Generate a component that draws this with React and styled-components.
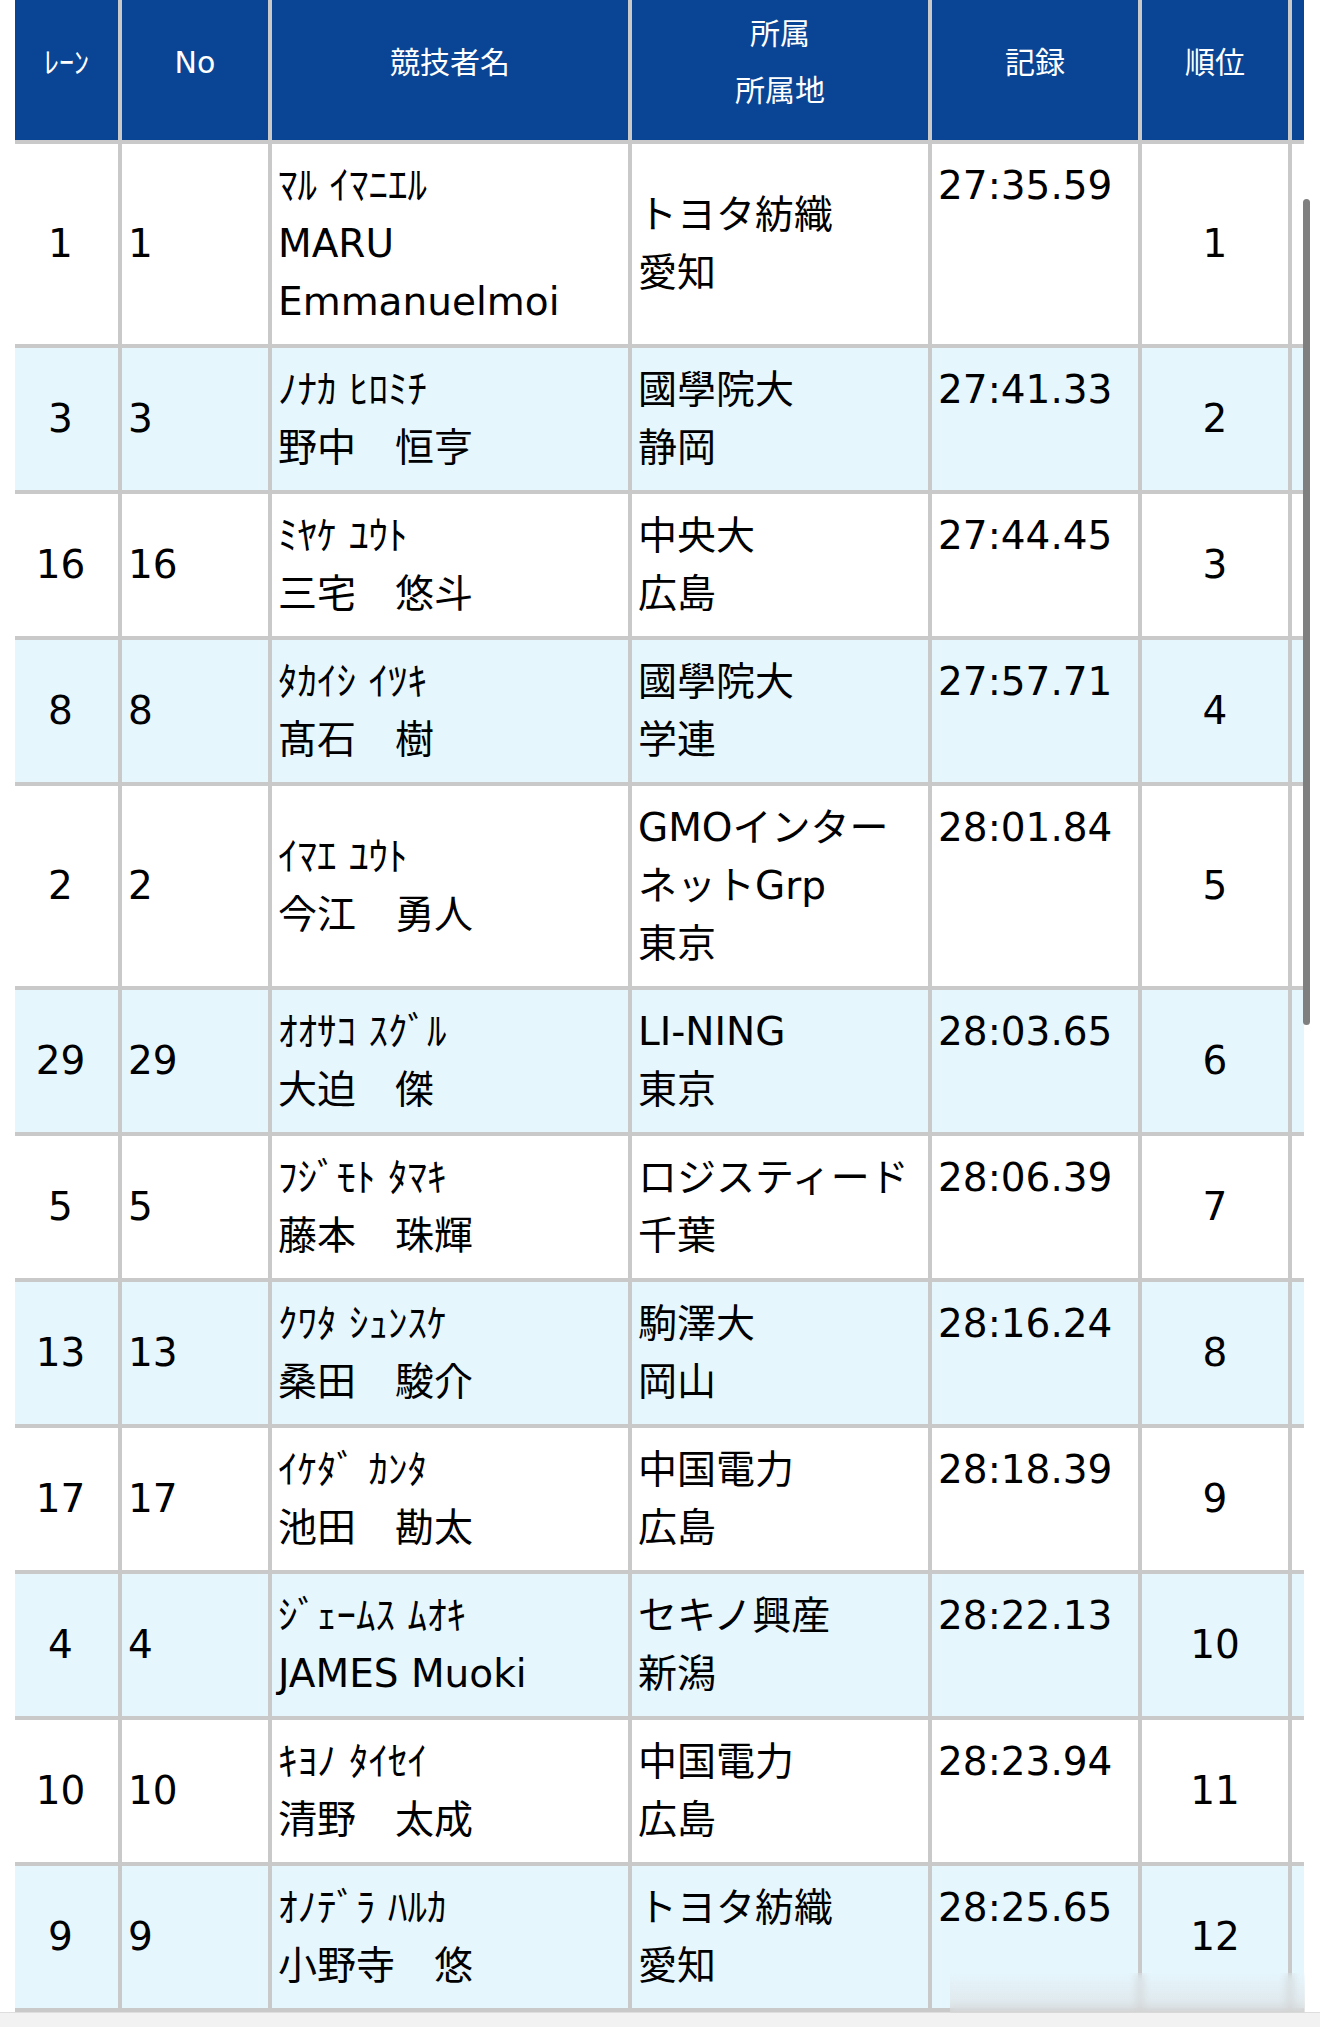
import React from "react";
import styled, { createGlobalStyle } from "styled-components";

const GlobalStyle = createGlobalStyle`
  body {
    margin: 0;
    background: #fff;
    font-family: "DejaVu Sans", "Noto Sans CJK JP", sans-serif;
    color: #000;
  }
`;

const Page = styled.div`
  position: relative;
  height: 2027px;
  overflow: hidden;
  display: flex;
  flex-direction: column;
`;

const Viewport = styled.div`
  flex: 1;
  overflow: hidden;
  padding-left: 15px;
`;

const Clip = styled.div`
  width: 1289px;
  overflow: hidden;
`;

const Table = styled.table`
  table-layout: fixed;
  width: 1427px;
  border-collapse: separate;
  border-spacing: 0;
`;

const Head = styled.th`
  box-sizing: border-box;
  width: ${p => p.$w}px;
  height: 144px;
  padding: 4px 4px 20px;
  background: #0a4595;
  color: #fff;
  font-size: 30px;
  font-weight: normal;
  line-height: 57px;
  text-align: center;
  vertical-align: middle;
  border-right: 4px solid #c9c9c9;
  border-bottom: 4px solid #c9c9c9;
`;

const Row = styled.tr`
  background: ${p => (p.$alt ? "#e6f6fd" : "#fff")};
`;

const Cell = styled.td`
  box-sizing: border-box;
  padding: 13px 6px;
  font-size: 39px;
  line-height: 58px;
  text-align: ${p => p.$align || "left"};
  vertical-align: ${p => p.$valign || "middle"};
  border-right: 4px solid #c9c9c9;
  border-bottom: 4px solid #c9c9c9;
`;

const Lane = styled(Cell)`
  padding-right: 18px;
`;

const Kana = styled.div`
  white-space: nowrap;
`;

const ScrollThumb = styled.div`
  position: absolute;
  left: 1303px;
  top: 199px;
  width: 7px;
  height: 826px;
  border-radius: 4px;
  background: #7f7f7f;
`;

const Blur = styled.div`
  position: absolute;
  left: 950px;
  top: 1973px;
  width: 355px;
  height: 40px;
  backdrop-filter: blur(4px);
  background: linear-gradient(to bottom, rgba(255,255,255,0) 0%, rgba(215,215,215,0.55) 100%);
`;

const BottomBar = styled.div`
  height: 14px;
  background: #f2f2f2;
  border-top: 1px solid #dedede;
`;

const columns = [
  { key: "lane", label: "ﾚｰﾝ", w: 107 },
  { key: "no", label: "No", w: 150 },
  { key: "name", label: "競技者名", w: 360 },
  { key: "team", label: ["所属", "所属地"], w: 300 },
  { key: "time", label: "記録", w: 210 },
  { key: "rank", label: "順位", w: 150 },
  { key: "extra", label: "", w: 150 },
];

const results = [
  { lane: 1, no: 1, kana: "ﾏﾙ ｲﾏﾆｴﾙ", name: "MARU Emmanuelmoi", team: "トヨタ紡織", pref: "愛知", time: "27:35.59", rank: 1 },
  { lane: 3, no: 3, kana: "ﾉﾅｶ ﾋﾛﾐﾁ", name: "野中　恒亨", team: "國學院大", pref: "静岡", time: "27:41.33", rank: 2 },
  { lane: 16, no: 16, kana: "ﾐﾔｹ ﾕｳﾄ", name: "三宅　悠斗", team: "中央大", pref: "広島", time: "27:44.45", rank: 3 },
  { lane: 8, no: 8, kana: "ﾀｶｲｼ ｲﾂｷ", name: "髙石　樹", team: "國學院大", pref: "学連", time: "27:57.71", rank: 4 },
  { lane: 2, no: 2, kana: "ｲﾏｴ ﾕｳﾄ", name: "今江　勇人", team: "GMOインターネットGrp", pref: "東京", time: "28:01.84", rank: 5 },
  { lane: 29, no: 29, kana: "ｵｵｻｺ ｽｸﾞﾙ", name: "大迫　傑", team: "LI-NING", pref: "東京", time: "28:03.65", rank: 6 },
  { lane: 5, no: 5, kana: "ﾌｼﾞﾓﾄ ﾀﾏｷ", name: "藤本　珠輝", team: "ロジスティード", pref: "千葉", time: "28:06.39", rank: 7 },
  { lane: 13, no: 13, kana: "ｸﾜﾀ ｼｭﾝｽｹ", name: "桑田　駿介", team: "駒澤大", pref: "岡山", time: "28:16.24", rank: 8 },
  { lane: 17, no: 17, kana: "ｲｹﾀﾞ ｶﾝﾀ", name: "池田　勘太", team: "中国電力", pref: "広島", time: "28:18.39", rank: 9 },
  { lane: 4, no: 4, kana: "ｼﾞｪｰﾑｽ ﾑｵｷ", name: "JAMES Muoki", team: "セキノ興産", pref: "新潟", time: "28:22.13", rank: 10 },
  { lane: 10, no: 10, kana: "ｷﾖﾉ ﾀｲｾｲ", name: "清野　太成", team: "中国電力", pref: "広島", time: "28:23.94", rank: 11 },
  { lane: 9, no: 9, kana: "ｵﾉﾃﾞﾗ ﾊﾙｶ", name: "小野寺　悠", team: "トヨタ紡織", pref: "愛知", time: "28:25.65", rank: 12 },
];

function HeaderLabel({ label }) {
  if (Array.isArray(label)) {
    return label.map(l => <div key={l}>{l}</div>);
  }
  return label;
}

export default function App() {
  return (
    <Page>
      <GlobalStyle />
      <Viewport>
        <Clip>
          <Table>
            <thead>
              <tr>
                {columns.map(c => (
                  <Head key={c.key} $w={c.w}>
                    <HeaderLabel label={c.label} />
                  </Head>
                ))}
              </tr>
            </thead>
            <tbody>
              {results.map((r, i) => (
                <Row key={r.no} $alt={i % 2 === 1}>
                  <Lane $align="center">{r.lane}</Lane>
                  <Cell>{r.no}</Cell>
                  <Cell>
                    <Kana>{r.kana}</Kana>
                    <div>{r.name}</div>
                  </Cell>
                  <Cell>
                    <div>{r.team}</div>
                    <div>{r.pref}</div>
                  </Cell>
                  <Cell $valign="top">{r.time}</Cell>
                  <Cell $align="center">{r.rank}</Cell>
                  <Cell />
                </Row>
              ))}
              {/* next row, only its top edge shows above the bar */}
              <Row>
                <Cell>&nbsp;</Cell>
                <Cell />
                <Cell />
                <Cell />
                <Cell />
                <Cell />
                <Cell />
              </Row>
            </tbody>
          </Table>
        </Clip>
      </Viewport>
      <BottomBar />
      <ScrollThumb />
      <Blur />
    </Page>
  );
}
